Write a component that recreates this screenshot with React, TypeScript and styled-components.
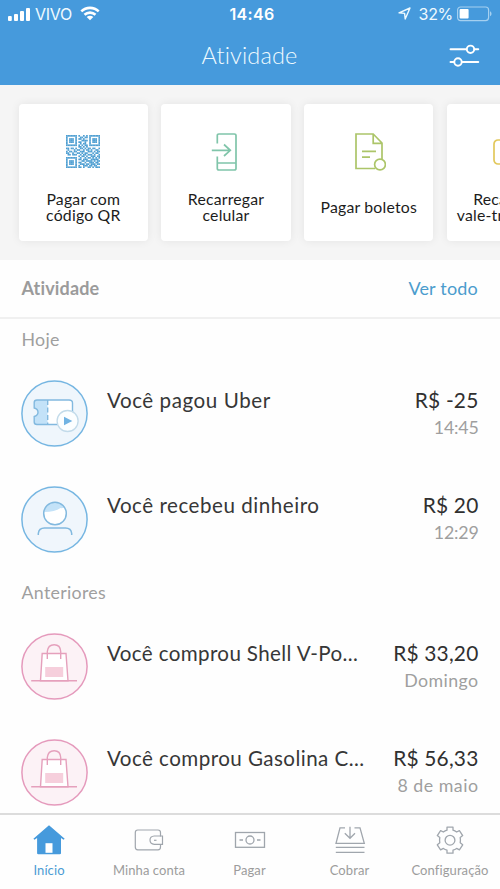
import React from 'react';
import styled, { createGlobalStyle } from 'styled-components';

const GlobalStyle = createGlobalStyle`
  * { box-sizing: border-box; }
  html, body { margin: 0; padding: 0; background: #fefefe; }
  body { font-family: Lato, "Open Sans", sans-serif; overflow: hidden; }
  svg { display: block; flex: none; }
`;

const Screen = styled.div`
  width: 500px;
  height: 889px;
  display: flex;
  flex-direction: column;
  overflow: hidden;
  background: #fefefe;
`;

const Header = styled.header`
  height: 85px;
  flex: none;
  background: #469adc;
  color: #f0faff;
`;

const StatusBar = styled.div`
  height: 27px;
  padding: 0 8px;
  display: grid;
  grid-template-columns: 1fr auto 1fr;
  align-items: center;
  font-family: Inter, sans-serif;
  font-size: 16px;
`;

const StatusGroup = styled.div<{ $end?: boolean }>`
  display: flex;
  align-items: center;
  justify-content: ${p => (p.$end ? 'flex-end' : 'flex-start')};
`;

const Carrier = styled.span`
  margin: 0 8px 0 4px;
  font-weight: 400;
  letter-spacing: -0.3px;
`;

const Clock = styled.span`
  padding-left: 4px;
  font-weight: 600;
  letter-spacing: 0.3px;
  color: #fff;
`;

const Percent = styled.span`
  margin: 0 4px 0 8px;
  letter-spacing: -0.3px;
`;

const TitleBar = styled.div`
  height: 57px;
  padding: 0 20px;
  display: grid;
  grid-template-columns: 1fr auto 1fr;
  align-items: center;
  svg { justify-self: end; }
`;

const Title = styled.h1`
  grid-column: 2;
  margin: 0;
  padding: 0 1px 2px 0;
  font-size: 23.5px;
  font-weight: 300;
  line-height: 28px;
  letter-spacing: 0.15px;
`;

const Carousel = styled.section`
  height: 175px;
  flex: none;
  padding: 19px 0 0 18.7px;
  display: flex;
  gap: 13.4px;
  background: #f5f5f5;
  overflow: hidden;
`;

const ActionCard = styled.div`
  width: 129.3px;
  height: 137px;
  flex: none;
  display: flex;
  flex-direction: column;
  align-items: center;
  border-radius: 4px;
  background: #fff;
  box-shadow: 0 0 10px rgba(0, 0, 0, 0.075);
`;

const CardIcon = styled.div<{ $shift: number }>`
  height: 82px;
  padding-top: 13px;
  margin-left: ${p => p.$shift}px;
  display: flex;
  align-items: center;
`;

const CardLabel = styled.div`
  height: 42px;
  display: flex;
  align-items: center;
  text-align: center;
  white-space: pre;
  font-size: 15.8px;
  line-height: 16px;
  color: #1c1c1c;
  letter-spacing: 0.2px;
`;

const ActivityHead = styled.div`
  height: 58.5px;
  flex: none;
  padding: 0 22px 0 21.5px;
  display: flex;
  align-items: center;
  justify-content: space-between;
  border-bottom: 2px solid #f0f0f0;
`;

const Heading = styled.h2`
  margin: 0;
  font-size: 18px;
  font-weight: 700;
  letter-spacing: 0.15px;
  color: #9b9b9b;
`;

const Link = styled.a`
  font-size: 18px;
  letter-spacing: 0.2px;
  color: #4b9ccd;
`;

const List = styled.main`
  flex: 1;
  min-height: 0;
  overflow: hidden;
`;

const GroupLabel = styled.div`
  height: 42.5px;
  padding: 0 21.5px 2px;
  display: flex;
  align-items: center;
  font-size: 17.8px;
  letter-spacing: 0.3px;
  color: #9f9f9f;
`;

const Row = styled.article`
  height: 105.4px;
  padding: 0 21.5px 0 21px;
  display: grid;
  grid-template-columns: 86px 1fr auto;
  align-items: center;
`;

const RowText = styled.div`
  height: 54px;
  display: flex;
  flex-direction: column;
`;

const Name = styled.div<{ $spacing: number }>`
  font-size: 20.6px;
  line-height: 27px;
  letter-spacing: ${p => p.$spacing}px;
  color: #373737;
  white-space: nowrap;
`;

const Amount = styled.div`
  font-size: 20.9px;
  line-height: 25px;
  padding-bottom: 2px;
  letter-spacing: 0.2px;
  color: #303030;
  text-align: right;
`;

const When = styled.div<{ $spacing: number }>`
  font-size: 17.8px;
  line-height: 27px;
  letter-spacing: ${p => p.$spacing}px;
  color: #9f9f9f;
  text-align: right;
`;

const TabBar = styled.nav`
  height: 76px;
  flex: none;
  display: grid;
  grid-template-columns: 98px 102px 99px 101px 100px;
  border-top: 2px solid #dcdcdc;
  background: #fefefe;
`;

const Tab = styled.div<{ $active?: boolean }>`
  display: flex;
  flex-direction: column;
  align-items: center;
  padding-top: 7px;
  gap: 4px;
  font-size: 13px;
  line-height: 17px;
  letter-spacing: 0.1px;
  color: ${p => (p.$active ? '#4b9cd4' : '#9c9c9c')};
  white-space: nowrap;
`;

const Signal = () => (
  <svg width="23" height="14" viewBox="0 0 23 14" fill="#fff">
    <rect x="0" y="9" width="3.8" height="5" rx="1" />
    <rect x="6" y="7" width="4" height="7" rx="1" />
    <rect x="12" y="4" width="4" height="10" rx="1" />
    <rect x="18" y="1" width="4" height="13" rx="1" />
  </svg>
);

const Wifi = () => (
  <svg width="20" height="15" viewBox="0 0 20 15" fill="none" stroke="#fff" strokeWidth="2.6">
    <path d="M1.3 5.4C6.2.7 13.8.7 18.7 5.4" />
    <path d="M4.5 8.8C7.6 5.9 12.4 5.9 15.5 8.8" />
    <path d="M6.7 11.1C8.6 9.4 11.4 9.4 13.3 11.1L10 14.3Z" fill="#fff" stroke="none" />
  </svg>
);

const LocationArrow = () => (
  <svg width="13" height="13" viewBox="0 0 13 13" fill="none" stroke="#eefaff" strokeWidth="1.4" strokeLinejoin="round">
    <path d="M1 5.8 12 1 7.2 12 6.6 6.4Z" />
  </svg>
);

const Battery = () => (
  <svg width="35" height="16" viewBox="0 0 35 16">
    <rect x=".6" y="1" width="31" height="13.6" rx="3" fill="none" stroke="#a5d0f0" strokeWidth="1.2" />
    <rect x="2.6" y="3" width="9" height="9.6" rx="1" fill="#fff" />
    <path d="M33 5.3c2 .8 2 4.2 0 5Z" fill="#a5d0f0" />
  </svg>
);

const Sliders = () => (
  <svg width="31" height="24" viewBox="0 0 31 24" fill="none" stroke="#fff" strokeWidth="1.9" strokeLinecap="round">
    <path d="M1.5 5.3H17.5M25.5 5.3H29.3M1.5 18H5M13 18H29.3" />
    <circle cx="21.5" cy="5.3" r="3.7" />
    <circle cx="9" cy="18" r="3.7" />
  </svg>
);

const QR_ROWS = [
  '1111111010010101111111',
  '1000001001101101000001',
  '1011101011010001011101',
  '1011101000111101011101',
  '1011101011001001011101',
  '1000001001011001000001',
  '1111111010101101111111',
  '0000000011010100000000',
  '1101101001101011011001',
  '0100010110010110100110',
  '1011011001110011101011',
  '1100100110101100010110',
  '0110111001011011101001',
  '0000000010110100111011',
  '1111111001001011010101',
  '1000001011011100111110',
  '1011101000110111101011',
  '1011101011001001110110',
  '1011101001110110111011',
  '1000001010011101101100',
  '1111111011010011010111',
];

const QrCode = () => (
  <svg width="34" height="33" viewBox="0 0 22 21" preserveAspectRatio="none" fill="#4f9fd2">
    {QR_ROWS.flatMap((row, y) =>
      [...row].map((cell, x) =>
        cell === '1' ? <rect key={`${x}-${y}`} x={x} y={y} width="1.08" height="1.08" /> : null,
      ),
    )}
  </svg>
);

const PhoneArrow = () => (
  <svg width="27" height="38" viewBox="0 0 27 38" fill="none" stroke="#80c5aa" strokeWidth="1.7">
    <path d="M6.3 10.5V2.6Q6.3 1 7.9 1H23.3Q25 1 25 2.6V35.4Q25 37 23.3 37H7.9Q6.3 37 6.3 35.4V23.5M6.3 30H25" />
    <path d="M.8 17.3H19.3M13 11.5 19.3 17.3 13 23" />
  </svg>
);

const Bill = () => (
  <svg width="31" height="38" viewBox="0 0 31 38" fill="none" stroke="#acc569" strokeWidth="1.7">
    <path d="M20 35.5H1V1H18.2L27 10V26M18.2 1V10.3H27" />
    <path d="M7 18.3H21M7 24.2H15" />
    <circle cx="25" cy="31.5" r="5.4" />
  </svg>
);

const TransitCard = () => (
  <svg width="36" height="26" viewBox="0 0 36 26" fill="none" stroke="#e2c85c" strokeWidth="1.7">
    <rect x="1" y="1" width="34" height="24" rx="4" />
    <path d="M9 9H29M9 16H18" />
  </svg>
);

const TicketBadge = () => (
  <svg width="67" height="67" viewBox="0 0 67 67">
    <circle cx="33.5" cy="33.5" r="32.6" fill="#eff6fc" stroke="#76b6e2" strokeWidth="1.5" />
    <path d="M26.5 20H48Q51.5 20 51.5 23V41.5Q51.5 44.5 48 44.5H26.5Z" fill="#fff" />
    <path d="M26.5 20H16Q13.2 20 13.2 22.5V28Q17 29 17 32.3Q17 35.5 13.2 36.5V42Q13.2 44.5 16 44.5H26.5Z" fill="#c3e2f8" />
    <path d="M26.5 20H48Q51.5 20 51.5 23V41.5Q51.5 44.5 48 44.5H16Q13.2 44.5 13.2 42V36.5Q17 35.5 17 32.3Q17 29 13.2 28V22.5Q13.2 20 16 20Z" fill="none" stroke="#82b9df" strokeWidth="1.4" />
    <path d="M26.7 20V44.5" fill="none" stroke="#82b9df" strokeWidth="1.4" strokeDasharray="5 2.5" />
    <circle cx="46.6" cy="41" r="10.5" fill="#fcfeff" stroke="#c3dbea" strokeWidth="1.3" />
    <path d="M43 36.7 51.3 41 43 45.2Z" fill="#71b3e3" />
  </svg>
);

const PersonBadge = () => (
  <svg width="67" height="67" viewBox="0 0 67 67">
    <circle cx="33.5" cy="33.5" r="32.6" fill="#f0f6fc" stroke="#76b6e2" strokeWidth="1.5" />
    <circle cx="34" cy="27.5" r="11.3" fill="#fff" />
    <path d="M23 26A11.3 11.3 0 0 1 43.5 21.4Q40.5 22.5 39.5 22Q34 26 23 26Z" fill="#c3e2f8" />
    <circle cx="34" cy="27.5" r="11.3" fill="none" stroke="#82b9df" strokeWidth="1.5" />
    <path d="M17.3 49V47.5Q17.8 42 23.5 42H44.5Q50.2 42 50.7 47.5V49" fill="none" stroke="#82b9df" strokeWidth="1.5" />
  </svg>
);

const BagBadge = () => (
  <svg width="67" height="67" viewBox="0 0 67 67">
    <circle cx="33.5" cy="33.5" r="32.6" fill="#fcf2f6" stroke="#e59abc" strokeWidth="1.5" />
    <path d="M21.2 20.5H45L47 47.7H19.5Z" fill="#fff" stroke="#e5a0bc" strokeWidth="1.4" />
    <rect x="24.2" y="34" width="18" height="10" fill="#f6cfdc" />
    <path d="M26.3 26V18.5Q27 11.7 33.2 11.7Q39.4 11.7 39.7 18.5V26M10.2 47.7H56" fill="none" stroke="#e5a0bc" strokeWidth="1.4" />
  </svg>
);

const HomeIcon = () => (
  <svg width="34" height="36" viewBox="0 0 34 36">
    <path d="M17 3.3 32.7 16.7 31.6 17.8 29 16V31.2Q29 32.3 27.8 32.3H6.3Q5.1 32.3 5.1 31.2V16L2.5 17.8 1.4 16.7Z" fill="#469adc" />
    <rect x="13.5" y="21.2" width="7" height="9.6" fill="#fff" />
  </svg>
);

const WalletIcon = () => (
  <svg width="34" height="36" viewBox="0 0 34 36" fill="none" stroke="#a0a6ad" strokeWidth="1.2">
    <path d="M28.5 14.5V10.5Q28.5 8 26 8H5.8Q3.3 8 3.3 10.5V25Q3.3 27.8 5.8 27.8H26Q28.5 27.8 28.5 25V22.5" />
    <path d="M30.5 14H22.3Q18 14.2 18 18.1Q18 22.2 22.3 22.3H30.5Z" />
    <path d="M22 18.3H24.5" />
  </svg>
);

const CashIcon = () => (
  <svg width="34" height="36" viewBox="0 0 34 36" fill="none" stroke="#9fa5ac" strokeWidth="1.3">
    <rect x="2.5" y="10.5" width="29" height="14.8" />
    <circle cx="17" cy="18" r="4" />
    <path d="M6.5 18H10M24 18H27.5" />
  </svg>
);

const CollectIcon = () => (
  <svg width="34" height="36" viewBox="0 0 34 36" fill="none" stroke="#a0a6ad" strokeWidth="1.3">
    <path d="M12 5.8H7L3 21.3H31.3L27 5.8H21.5" />
    <path d="M17 4.8V16.2M11.8 11.2 17 16.3 22 11.2M2.8 25.3H31.5M2.8 30.3H31.5" />
  </svg>
);

const GearIcon = () => (
  <svg width="34" height="36" viewBox="0 0 34 36" fill="none" stroke="#a0a6ad" strokeWidth="1.3" strokeLinejoin="round">
    <path d="M14 5.2H20V8.2Q22 8.8 23.6 10L26.4 8.6L29.7 13.6L27.2 15.5Q27.7 18 27.2 20.8L29.7 22.8L26.4 27.8L23.6 26.4Q22 27.6 20 28.2V31.2H14V28.2Q12 27.6 10.4 26.4L7.6 27.8L4.3 22.8L6.8 20.8Q6.3 18 6.8 15.5L4.3 13.6L7.6 8.6L10.4 10Q12 8.8 14 8.2Z" />
    <circle cx="17" cy="18.2" r="4.9" />
  </svg>
);

const actions = [
  { icon: <QrCode />, label: 'Pagar com\ncódigo QR', shift: 0 },
  { icon: <PhoneArrow />, label: 'Recarregar\ncelular', shift: -4 },
  { icon: <Bill />, label: 'Pagar boletos', shift: 3 },
  { icon: <TransitCard />, label: 'Recarregar\nvale-transporte', shift: -1 },
];

interface Entry {
  icon: React.ReactNode;
  name: string;
  spacing: number;
  amount: string;
  when: string;
  whenSpacing: number;
}

const today: Entry[] = [
  { icon: <TicketBadge />, name: 'Você pagou Uber', spacing: 0.55, amount: 'R$ -25', when: '14:45', whenSpacing: -0.2 },
  { icon: <PersonBadge />, name: 'Você recebeu dinheiro', spacing: 0.52, amount: 'R$ 20', when: '12:29', whenSpacing: -0.2 },
];

const earlier: Entry[] = [
  { icon: <BagBadge />, name: 'Você comprou Shell V-Po...', spacing: 0.36, amount: 'R$ 33,20', when: 'Domingo', whenSpacing: 0.4 },
  { icon: <BagBadge />, name: 'Você comprou Gasolina C...', spacing: 0.44, amount: 'R$ 56,33', when: '8 de maio', whenSpacing: 0.5 },
];

const tabs = [
  { icon: <HomeIcon />, label: 'Início', active: true },
  { icon: <WalletIcon />, label: 'Minha conta' },
  { icon: <CashIcon />, label: 'Pagar' },
  { icon: <CollectIcon />, label: 'Cobrar' },
  { icon: <GearIcon />, label: 'Configuração' },
];

const ActivityRow = ({ entry }: { entry: Entry }) => (
  <Row>
    {entry.icon}
    <RowText>
      <Name $spacing={entry.spacing}>{entry.name}</Name>
    </RowText>
    <RowText>
      <Amount>{entry.amount}</Amount>
      <When $spacing={entry.whenSpacing}>{entry.when}</When>
    </RowText>
  </Row>
);

export default function App() {
  return (
    <Screen>
      <GlobalStyle />
      <Header>
        <StatusBar>
          <StatusGroup>
            <Signal />
            <Carrier>VIVO</Carrier>
            <Wifi />
          </StatusGroup>
          <Clock>14:46</Clock>
          <StatusGroup $end>
            <LocationArrow />
            <Percent>32%</Percent>
            <Battery />
          </StatusGroup>
        </StatusBar>
        <TitleBar>
          <Title>Atividade</Title>
          <Sliders />
        </TitleBar>
      </Header>
      <Carousel>
        {actions.map(a => (
          <ActionCard key={a.label}>
            <CardIcon $shift={a.shift}>{a.icon}</CardIcon>
            <CardLabel>{a.label}</CardLabel>
          </ActionCard>
        ))}
      </Carousel>
      <ActivityHead>
        <Heading>Atividade</Heading>
        <Link>Ver todo</Link>
      </ActivityHead>
      <List>
        <GroupLabel>Hoje</GroupLabel>
        {today.map(e => <ActivityRow key={e.name} entry={e} />)}
        <GroupLabel>Anteriores</GroupLabel>
        {earlier.map(e => <ActivityRow key={e.name} entry={e} />)}
      </List>
      <TabBar>
        {tabs.map(t => (
          <Tab key={t.label} $active={t.active}>
            {t.icon}
            {t.label}
          </Tab>
        ))}
      </TabBar>
    </Screen>
  );
}
